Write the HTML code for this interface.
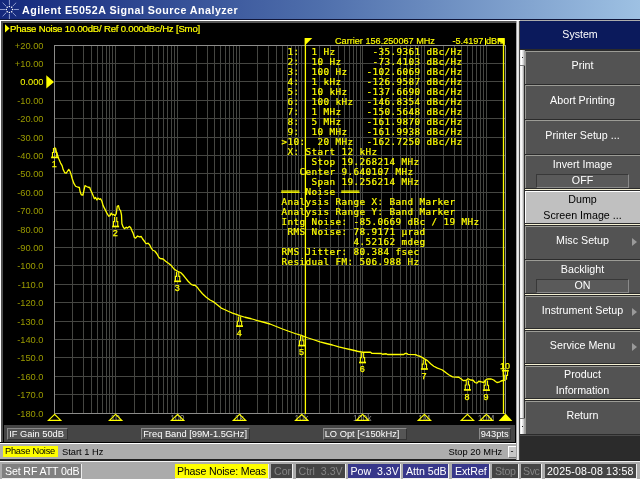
<!DOCTYPE html>
<html><head><meta charset="utf-8"><title>Agilent E5052A Signal Source Analyzer</title>
<style>
html,body{margin:0;padding:0;}
body{width:640px;height:479px;overflow:hidden;position:relative;background:#c0c0c0;font-family:"Liberation Sans","DejaVu Sans",sans-serif;}
div{position:absolute;box-sizing:border-box;white-space:nowrap;}
.tb{left:0;top:0;width:640px;height:19px;background:linear-gradient(90deg,#14287c 0%,#4f6fac 50%,#9ec1e3 100%);}
.tb .t{left:22px;top:3px;color:#fff;font-weight:bold;font-size:10.7px;line-height:15px;letter-spacing:0.47px;}
.hl{left:0;top:19px;width:640px;height:1px;background:#10163a;}
.wl{left:0;top:20px;width:520px;height:1.3px;background:#fff;}
.lw{left:0;top:20px;width:1px;height:424px;background:#fff;}
.plotbg{left:1px;top:21px;width:515px;height:423px;background:#000;border-left:2px solid #505050;border-top:2px solid #585858;}
.plot{position:absolute;left:0;top:0;}
.ttl{left:10px;top:22px;color:#ffff00;-webkit-text-stroke:0.2px #ffff00;font-size:9.6px;line-height:13px;letter-spacing:-0.2px;}
.yl{left:0;width:43.5px;text-align:right;color:#9a9a00;font-size:9.3px;line-height:12px;}
.yl.ref{color:#ffff00;}
.mn{font-family:"Liberation Sans",sans-serif;font-size:9px;fill:#ffff00;stroke:#ffff00;stroke-width:0.25px;text-anchor:middle;}
.xl{font-family:"Liberation Sans",sans-serif;font-size:8.5px;fill:#8c8c8c;text-anchor:middle;}
.mt{color:#ffff00;font-family:"DejaVu Sans Mono","Liberation Mono",monospace;font-size:9.3px;letter-spacing:0.4px;line-height:10px;white-space:pre;-webkit-text-stroke:0.2px #ffff00;}
.car{color:#ffff00;-webkit-text-stroke:0.15px #ffff00;font-size:9.15px;line-height:12px;top:34.5px;}
.sb{left:4px;top:425px;width:511px;height:17px;background:#454545;}
.sbx{top:3px;height:12px;background:#555;border:1px solid #8a8a8a;border-right-color:#333;border-bottom-color:#333;color:#fff;font-size:9.3px;line-height:10px;padding-left:1.2px;}
.stim{left:1px;top:444px;width:516px;height:15.5px;background:#adadad;color:#000;font-size:9.3px;line-height:16px;}
.stat{left:0;top:461px;width:640px;height:18px;background:#ababab;border-top:1px solid #f4f4f4;}
.sx{top:2px;height:14.5px;font-size:10.6px;line-height:14px;padding-left:3px;border-right:1px solid #eee;border-bottom:1px solid #eee;}
.panel{left:520px;top:21px;width:120px;height:439px;background:#2b2b2b;}
.hdr{left:0;top:0;width:120px;height:28px;background:#0b1a5c;color:#fff;font-size:10.6px;line-height:27px;text-align:center;}
.slot{left:0;width:120px;height:35px;color:#fff;font-size:10.7px;text-align:center;}
.slot.ssel{color:#000;}
.kb{left:4.7px;width:116px;background:#535353;border-top:1.1px solid #9c9c96;border-left:1.2px solid #9a9a96;}
.kb.sel{background:#c0c0c0;border-top-color:#fff;border-left-color:#fff;}
.sep{left:4.7px;width:116px;height:1.2px;background:#f6f2d4;}
.kl{left:6px;top:2px;width:113px;line-height:29.6px;}
.kl1{left:6px;top:3px;width:113px;line-height:15px;}
.kl2{left:6px;top:2.4px;width:113px;line-height:16px;white-space:normal;}
.kv{left:16px;top:19.5px;width:93px;height:14px;background:#5a5a5a;border:1px solid #383838;border-bottom-color:#8a8a8a;border-right-color:#8a8a8a;line-height:11px;}
.arr{right:2.7px;top:13.6px;width:0;height:0;border-left:5.6px solid #9a9a9a;border-top:4.6px solid transparent;border-bottom:4.6px solid transparent;}
#root{left:0;top:0;width:640px;height:479px;overflow:hidden;background:#adadad;will-change:transform;}
</style></head><body><div id="root">
<div class="tb"><svg style="position:absolute;left:0;top:0" width="20" height="19" viewBox="0 0 20 19"><g stroke="#c8d2f4" stroke-width="0.8" stroke-linecap="round" opacity="0.85"><path d="M9.4 0.3V4.6M9.4 14.4V18.7M0.3 9.5H4.6M14.2 9.5H18.5M2.9 3L5.9 6M12.9 13L15.9 16M15.9 3L12.9 6M5.9 13L2.9 16"/></g><g fill="#fff"><circle cx="9.4" cy="6.4" r="0.75"/><circle cx="11.6" cy="7.3" r="0.75"/><circle cx="12.5" cy="9.5" r="0.75"/><circle cx="11.6" cy="11.7" r="0.75"/><circle cx="9.4" cy="12.6" r="0.75"/><circle cx="7.2" cy="11.7" r="0.75"/><circle cx="6.3" cy="9.5" r="0.75"/><circle cx="7.2" cy="7.3" r="0.75"/></g></svg><div class="t">Agilent E5052A Signal Source Analyzer</div></div>
<div class="hl"></div>
<div class="plotbg"></div>
<div class="wl"></div><div class="lw"></div>
<div class="sb">
<div class="sbx" style="left:3px;width:61px">IF Gain 50dB</div>
<div class="sbx" style="left:137px;width:109px">Freq Band [99M-1.5GHz]</div>
<div class="sbx" style="left:318.5px;width:84px">LO Opt [&lt;150kHz]</div>
<div class="sbx" style="left:474.5px;width:32px">943pts</div>
</div>
<svg class="plot" width="640" height="479" viewBox="0 0 640 479"><path d="M54 63.5H506M54 81.5H506M54 100.5H506M54 118.5H506M54 137.5H506M54 155.5H506M54 173.5H506M54 192.5H506M54 210.5H506M54 229.5H506M54 247.5H506M54 265.5H506M54 284.5H506M54 302.5H506M54 321.5H506M54 339.5H506M54 357.5H506M54 376.5H506M54 394.5H506M72.5 45.5V413.5M83.5 45.5V413.5M91.5 45.5V413.5M97.5 45.5V413.5M102.5 45.5V413.5M106.5 45.5V413.5M109.5 45.5V413.5M112.5 45.5V413.5M115.5 45.5V413.5M134.5 45.5V413.5M145.5 45.5V413.5M152.5 45.5V413.5M158.5 45.5V413.5M163.5 45.5V413.5M167.5 45.5V413.5M171.5 45.5V413.5M174.5 45.5V413.5M177.5 45.5V413.5M196.5 45.5V413.5M207.5 45.5V413.5M214.5 45.5V413.5M220.5 45.5V413.5M225.5 45.5V413.5M229.5 45.5V413.5M233.5 45.5V413.5M236.5 45.5V413.5M239.5 45.5V413.5M257.5 45.5V413.5M268.5 45.5V413.5M276.5 45.5V413.5M282.5 45.5V413.5M287.5 45.5V413.5M291.5 45.5V413.5M295.5 45.5V413.5M298.5 45.5V413.5M301.5 45.5V413.5M319.5 45.5V413.5M330.5 45.5V413.5M338.5 45.5V413.5M344.5 45.5V413.5M349.5 45.5V413.5M353.5 45.5V413.5M356.5 45.5V413.5M360.5 45.5V413.5M362.5 45.5V413.5M381.5 45.5V413.5M392.5 45.5V413.5M400.5 45.5V413.5M406.5 45.5V413.5M410.5 45.5V413.5M415.5 45.5V413.5M418.5 45.5V413.5M421.5 45.5V413.5M424.5 45.5V413.5M443.5 45.5V413.5M454.5 45.5V413.5M461.5 45.5V413.5M467.5 45.5V413.5M472.5 45.5V413.5M476.5 45.5V413.5M480.5 45.5V413.5M483.5 45.5V413.5M486.5 45.5V413.5" stroke="#454642" stroke-width="1" fill="none" shape-rendering="crispEdges"/><rect x="54.5" y="45.5" width="451.0" height="368.0" fill="none" stroke="#8c8c8a" stroke-width="1" shape-rendering="crispEdges"/><path d="M305.4 38V414.0M503.5 38V414.0" stroke="#ffff00" stroke-width="1.3" fill="none"/><path d="M304.79999999999995 38h7.5l-7.5 7.5z" fill="#ffff00"/><path d="M504.7 38h-7l0 3l3.5 1.5l3.5 3z" fill="#ffff00"/><path d="M485.5 38V45" stroke="#ffff00" stroke-width="1"/><polyline points="54.60,147.25 56.00,150.60 57.50,155.00 58.75,158.75 60.60,163.10 62.10,165.60 63.10,169.40 64.75,172.75 66.25,173.10 67.50,171.25 68.75,169.40 70.00,171.25 71.00,174.40 72.25,178.75 73.75,183.10 75.60,186.25 78.10,187.25 79.40,187.50 80.00,191.25 81.25,194.75 82.90,195.00 83.75,191.25 85.00,185.60 86.50,186.50 88.10,187.25 89.75,187.50 90.60,190.00 91.25,191.25 93.10,195.60 94.40,198.75 95.60,197.50 96.90,200.00 98.10,198.10 99.40,199.40 100.60,198.75 101.90,201.25 103.10,205.60 105.00,209.40 106.90,213.10 108.75,216.25 110.00,215.60 111.25,213.10 112.50,215.00 113.75,214.40 115.00,215.80 116.25,213.75 117.25,206.25 118.50,205.60 119.40,209.40 120.60,210.60 121.50,215.00 121.90,223.75 123.10,226.90 124.40,228.75 126.25,227.25 127.50,228.10 129.40,226.50 130.60,227.50 131.90,230.60 133.10,233.10 134.40,237.50 135.60,238.10 137.50,236.00 139.40,236.90 141.25,236.50 142.50,238.75 144.40,241.25 145.60,243.10 146.90,243.75 148.10,243.10 149.75,245.00 151.25,248.10 152.75,250.25 154.75,251.00 156.90,253.75 158.75,257.25 160.25,258.50 163.10,259.00 165.60,261.25 168.75,263.50 171.25,265.60 174.40,269.40 177.50,271.25 180.60,272.50 183.10,275.00 185.60,278.10 188.10,281.25 191.25,284.40 193.10,285.25 195.00,285.25 197.50,287.50 198.75,289.40 202.50,293.75 206.25,297.25 210.00,300.00 213.75,301.90 217.50,305.00 221.25,308.10 225.00,309.75 228.75,311.50 232.50,313.10 236.25,314.40 239.40,315.60 245.00,317.25 251.25,318.75 257.50,320.60 263.75,322.25 270.00,324.00 276.25,326.50 282.50,329.00 288.75,331.25 295.00,333.50 301.25,335.40 307.50,337.75 313.75,339.75 320.00,341.90 326.25,343.50 332.50,345.00 338.75,346.90 345.00,348.30 351.25,349.75 357.50,351.25 362.50,352.25 370.60,352.25 371.90,353.40 381.25,353.50 382.50,354.25 386.25,353.75 387.50,354.50 403.75,354.50 405.00,353.50 406.90,353.50 408.10,354.40 415.60,354.60 417.50,355.60 420.00,356.25 422.50,357.60 424.40,358.90 427.50,360.60 430.60,363.75 433.75,366.25 437.50,368.10 441.90,369.75 445.00,371.90 448.75,374.75 452.50,376.90 458.75,377.25 460.60,378.50 463.10,380.60 466.25,380.25 468.10,378.75 470.60,380.00 473.10,380.25 475.00,382.50 476.90,383.10 478.75,381.25 481.25,381.90 483.75,382.50 485.60,380.00 487.50,379.00 491.25,379.00 493.75,380.00 495.50,381.50 497.00,382.50 499.00,382.20 501.00,381.00 503.00,380.50 505.30,380.00" fill="none" stroke="#ffff00" stroke-width="1.3" stroke-linejoin="round"/><path d="M53.45 147.90V152.50H52.45V156.90M55.75 147.90V152.50H56.75V156.90" fill="none" stroke="#ffff00" stroke-width="1.1"/><path d="M51.10 157.40H58.10" stroke="#ffff00" stroke-width="1.7"/><text x="54.30" y="167.20" class="mn">1</text><path d="M114.45 217.00V221.60H113.45V226.00M116.75 217.00V221.60H117.75V226.00" fill="none" stroke="#ffff00" stroke-width="1.1"/><path d="M112.10 226.50H119.10" stroke="#ffff00" stroke-width="1.7"/><text x="115.30" y="236.30" class="mn">2</text><path d="M176.45 271.80V276.40H175.45V280.80M178.75 271.80V276.40H179.75V280.80" fill="none" stroke="#ffff00" stroke-width="1.1"/><path d="M174.10 281.30H181.10" stroke="#ffff00" stroke-width="1.7"/><text x="177.30" y="291.10" class="mn">3</text><path d="M238.35 316.60V321.20H237.35V325.60M240.65 316.60V321.20H241.65V325.60" fill="none" stroke="#ffff00" stroke-width="1.1"/><path d="M236.00 326.10H243.00" stroke="#ffff00" stroke-width="1.7"/><text x="239.20" y="335.90" class="mn">4</text><path d="M300.55 336.10V340.70H299.55V345.10M302.85 336.10V340.70H303.85V345.10" fill="none" stroke="#ffff00" stroke-width="1.1"/><path d="M298.20 345.60H305.20" stroke="#ffff00" stroke-width="1.7"/><text x="301.40" y="355.40" class="mn">5</text><path d="M361.35 353.00V357.60H360.35V362.00M363.65 353.00V357.60H364.65V362.00" fill="none" stroke="#ffff00" stroke-width="1.1"/><path d="M359.00 362.50H366.00" stroke="#ffff00" stroke-width="1.7"/><text x="362.20" y="372.30" class="mn">6</text><path d="M423.25 359.50V364.10H422.25V368.50M425.55 359.50V364.10H426.55V368.50" fill="none" stroke="#ffff00" stroke-width="1.1"/><path d="M420.90 369.00H427.90" stroke="#ffff00" stroke-width="1.7"/><text x="424.10" y="378.80" class="mn">7</text><path d="M466.25 380.40V385.00H465.25V389.40M468.55 380.40V385.00H469.55V389.40" fill="none" stroke="#ffff00" stroke-width="1.1"/><path d="M463.90 389.90H470.90" stroke="#ffff00" stroke-width="1.7"/><text x="467.10" y="399.70" class="mn">8</text><path d="M485.25 380.60V385.20H484.25V389.60M487.55 380.60V385.20H488.55V389.60" fill="none" stroke="#ffff00" stroke-width="1.1"/><path d="M482.90 390.10H489.90" stroke="#ffff00" stroke-width="1.7"/><text x="486.10" y="399.90" class="mn">9</text><path d="M504.25 379.73V375.36H503.25V371.18M506.55 379.73V375.36H507.55V371.18" fill="none" stroke="#ffff00" stroke-width="1.1"/><path d="M501.90 370.71H508.90" stroke="#ffff00" stroke-width="1.7"/><text x="505.10" y="368.90" class="mn">10</text><text x="115.30" y="421" class="xl">10</text><text x="177.30" y="421" class="xl">100</text><text x="239.20" y="421" class="xl">1k</text><text x="301.40" y="421" class="xl">10k</text><text x="362.20" y="421" class="xl">100k</text><text x="424.10" y="421" class="xl">1M</text><text x="486.10" y="421" class="xl">10M</text><path d="M54.60 414.30L48.40 420.40H60.80Z" fill="none" stroke="#ffff00" stroke-width="1.15"/><path d="M115.60 414.30L109.40 420.40H121.80Z" fill="none" stroke="#ffff00" stroke-width="1.15"/><path d="M177.60 414.30L171.40 420.40H183.80Z" fill="none" stroke="#ffff00" stroke-width="1.15"/><path d="M239.50 414.30L233.30 420.40H245.70Z" fill="none" stroke="#ffff00" stroke-width="1.15"/><path d="M301.70 414.30L295.50 420.40H307.90Z" fill="none" stroke="#ffff00" stroke-width="1.15"/><path d="M362.50 414.30L356.30 420.40H368.70Z" fill="none" stroke="#ffff00" stroke-width="1.15"/><path d="M424.40 414.30L418.20 420.40H430.60Z" fill="none" stroke="#ffff00" stroke-width="1.15"/><path d="M467.40 414.30L461.20 420.40H473.60Z" fill="none" stroke="#ffff00" stroke-width="1.15"/><path d="M486.40 414.30L480.20 420.40H492.60Z" fill="none" stroke="#ffff00" stroke-width="1.15"/><path d="M505.50 413.50L498.60 421.10H512.40Z" fill="#ffff00"/><path d="M46.3 75.3L54 81.9L46.3 88.5Z" fill="#ffff00"/><path d="M5 24.3L9.6 28.4L5 32.5Z" fill="#ffff00"/></svg>
<div class="ttl">Phase Noise 10.00dB/ Ref 0.000dBc/Hz [Smo]</div>
<div class="yl" style="top:39.5px">+20.00</div><div class="yl" style="top:57.5px">+10.00</div><div class="yl ref" style="top:75.5px">0.000</div><div class="yl" style="top:94.5px">-10.00</div><div class="yl" style="top:112.5px">-20.00</div><div class="yl" style="top:131.5px">-30.00</div><div class="yl" style="top:149.5px">-40.00</div><div class="yl" style="top:167.5px">-50.00</div><div class="yl" style="top:186.5px">-60.00</div><div class="yl" style="top:204.5px">-70.00</div><div class="yl" style="top:223.5px">-80.00</div><div class="yl" style="top:241.5px">-90.00</div><div class="yl" style="top:259.5px">-100.0</div><div class="yl" style="top:278.5px">-110.0</div><div class="yl" style="top:296.5px">-120.0</div><div class="yl" style="top:315.5px">-130.0</div><div class="yl" style="top:333.5px">-140.0</div><div class="yl" style="top:351.5px">-150.0</div><div class="yl" style="top:370.5px">-160.0</div><div class="yl" style="top:388.5px">-170.0</div><div class="yl" style="top:407.5px">-180.0</div>
<div class="car" style="left:335px">Carrier 156.250067 MHz</div>
<div class="car" style="left:452.5px">-5.4197 dBm</div>
<div class="mt" style="left:287.5px;top:46.6px">1:</div><div class="mt" style="left:311.5px;top:46.6px">1 Hz</div><div class="mt" style="left:372.5px;top:46.6px">-35.9361 dBc/Hz</div><div class="mt" style="left:287.5px;top:56.6px">2:</div><div class="mt" style="left:311.5px;top:56.6px">10 Hz</div><div class="mt" style="left:372.5px;top:56.6px">-73.4103 dBc/Hz</div><div class="mt" style="left:287.5px;top:66.6px">3:</div><div class="mt" style="left:311.5px;top:66.6px">100 Hz</div><div class="mt" style="left:366.5px;top:66.6px">-102.6069 dBc/Hz</div><div class="mt" style="left:287.5px;top:76.6px">4:</div><div class="mt" style="left:311.5px;top:76.6px">1 kHz</div><div class="mt" style="left:366.5px;top:76.6px">-126.9587 dBc/Hz</div><div class="mt" style="left:287.5px;top:86.6px">5:</div><div class="mt" style="left:311.5px;top:86.6px">10 kHz</div><div class="mt" style="left:366.5px;top:86.6px">-137.6690 dBc/Hz</div><div class="mt" style="left:287.5px;top:96.6px">6:</div><div class="mt" style="left:311.5px;top:96.6px">100 kHz</div><div class="mt" style="left:366.5px;top:96.6px">-146.8354 dBc/Hz</div><div class="mt" style="left:287.5px;top:106.6px">7:</div><div class="mt" style="left:311.5px;top:106.6px">1 MHz</div><div class="mt" style="left:366.5px;top:106.6px">-150.5648 dBc/Hz</div><div class="mt" style="left:287.5px;top:116.6px">8:</div><div class="mt" style="left:311.5px;top:116.6px">5 MHz</div><div class="mt" style="left:366.5px;top:116.6px">-161.9870 dBc/Hz</div><div class="mt" style="left:287.5px;top:126.6px">9:</div><div class="mt" style="left:311.5px;top:126.6px">10 MHz</div><div class="mt" style="left:366.5px;top:126.6px">-161.9938 dBc/Hz</div><div class="mt" style="left:281.5px;top:136.6px">&gt;10:</div><div class="mt" style="left:317.5px;top:136.6px">20 MHz</div><div class="mt" style="left:366.5px;top:136.6px">-162.7250 dBc/Hz</div><div class="mt" style="left:287.5px;top:146.6px">X: Start 12 kHz</div><div class="mt" style="left:311.5px;top:156.6px">Stop 19.268214 MHz</div><div class="mt" style="left:299.5px;top:166.6px">Center 9.640107 MHz</div><div class="mt" style="left:311.5px;top:176.6px">Span 19.256214 MHz</div><div class="mt" style="left:281.5px;top:186.6px">═══ Noise ═══</div><div class="mt" style="left:281.5px;top:196.6px">Analysis Range X: Band Marker</div><div class="mt" style="left:281.5px;top:206.6px">Analysis Range Y: Band Marker</div><div class="mt" style="left:281.5px;top:216.6px">Intg Noise: -85.0669 dBc / 19 MHz</div><div class="mt" style="left:287.5px;top:226.6px">RMS Noise: 78.9171 µrad</div><div class="mt" style="left:353.5px;top:236.6px">4.52162 mdeg</div><div class="mt" style="left:281.5px;top:246.6px">RMS Jitter: 80.384 fsec</div><div class="mt" style="left:281.5px;top:256.6px">Residual FM: 506.988 Hz</div>
<div style="left:0;top:442px;width:517px;height:1.5px;background:#000"></div>
<div style="left:0;top:443.3px;width:517px;height:1px;background:#fff"></div>
<div class="stim">
<div style="left:2px;top:2px;width:55px;height:11px;background:#ffff00;line-height:11.5px;padding-left:2px;letter-spacing:-0.25px">Phase Noise</div>
<div style="left:61px;top:0">Start 1 Hz</div>
<div style="left:447.5px;top:0">Stop 20 MHz</div>
<div style="left:506.5px;top:2px;width:9px;height:11.5px;background:#c8c8c8;border:1px solid #fff;border-right-color:#777;border-bottom-color:#777;line-height:8px;font-size:9px;text-align:center">-</div>
</div>
<div style="left:0;top:459.3px;width:640px;height:1.7px;background:#202020"></div>
<div style="left:515.6px;top:21px;width:3.2px;height:439px;background:linear-gradient(90deg,#777,#d0d0d0 35%,#fff 60%,#fff 75%,#999)"></div>
<div style="left:518.8px;top:21px;width:1.2px;height:439px;background:#444"></div>
<div class="panel">
<div class="hdr">System</div>
<div style="left:0;top:29px;width:3.5px;height:368px;background:linear-gradient(90deg,#e8e8e8,#fff 30%,#d8d8d8 65%,#909090)"></div>
<div style="left:0;top:29px;width:4.5px;height:16px;background:linear-gradient(90deg,#e8e8e8,#fff 30%,#d8d8d8 65%,#909090);border-bottom:1px solid #777"></div>
<div style="left:1.8px;top:36px;width:1.3px;height:1.3px;background:#222"></div>
<div style="left:0;top:397px;width:4.5px;height:16px;background:linear-gradient(90deg,#e8e8e8,#fff 30%,#d8d8d8 65%,#909090);border-top:1px solid #777"></div>
<div style="left:1.8px;top:405px;width:1.3px;height:1.3px;background:#222"></div>
<div class="slot" style="top:28px"><div class="kb" style="top:1.6px;height:33.15px"></div><div class="kl">Print</div></div><div class="slot" style="top:63px"><div class="kb" style="top:0.8px;height:33.95px"></div><div class="kl">Abort Printing</div></div><div class="slot" style="top:98px"><div class="kb" style="top:0.8px;height:33.95px"></div><div class="kl">Printer Setup ...</div></div><div class="slot" style="top:133px"><div class="kb" style="top:0.8px;height:33.00px"></div><div class="kl1">Invert Image</div><div class="kv">OFF</div></div><div class="sep" style="top:167.8px"></div><div class="slot ssel" style="top:168px"><div class="kb sel" style="top:1.6px;height:32.20px"></div><div class="kl2">Dump<br>Screen Image ...</div></div><div class="sep" style="top:202.8px"></div><div class="slot" style="top:203px"><div class="kb" style="top:1.6px;height:33.15px"></div><div class="kl">Misc Setup</div><div class="arr"></div></div><div class="slot" style="top:238px"><div class="kb" style="top:0.8px;height:33.00px"></div><div class="kl1">Backlight</div><div class="kv">ON</div></div><div class="sep" style="top:272.8px"></div><div class="slot" style="top:273px"><div class="kb" style="top:1.6px;height:32.20px"></div><div class="kl">Instrument Setup</div><div class="arr"></div></div><div class="sep" style="top:307.8px"></div><div class="slot" style="top:308px"><div class="kb" style="top:1.6px;height:32.20px"></div><div class="kl">Service Menu</div><div class="arr"></div></div><div class="sep" style="top:342.8px"></div><div class="slot" style="top:343px"><div class="kb" style="top:1.6px;height:32.20px"></div><div class="kl2">Product<br>Information</div></div><div class="sep" style="top:377.8px"></div><div class="slot" style="top:378px"><div class="kb" style="top:1.6px;height:33.15px"></div><div class="kl">Return</div></div>
<div style="left:0;top:414.3px;width:120px;height:1px;background:#4a4a4a"></div>
</div>
<div class="stat">
<div class="sx" style="left:2px;width:80px;background:#808080;color:#fff;letter-spacing:-0.12px">Set RF ATT 0dB</div>
<div class="sx" style="left:175px;width:94px;background:#ffff00;color:#000;letter-spacing:-0.17px;padding-left:2px">Phase Noise: Meas</div>
<div class="sx" style="left:271px;width:22px;background:#444;color:#858585">Cor</div>
<div class="sx" style="left:295.5px;width:50px;background:#444;color:#858585;white-space:pre">Ctrl  3.3V</div>
<div class="sx" style="left:347.5px;width:53px;background:#37378a;color:#fff;white-space:pre">Pow  3.3V</div>
<div class="sx" style="left:403px;width:46px;background:#37378a;color:#fff">Attn 5dB</div>
<div class="sx" style="left:452px;width:37.5px;background:#37378a;color:#fff">ExtRef</div>
<div class="sx" style="left:492px;width:26.5px;background:#444;color:#858585;letter-spacing:-0.3px">Stop</div>
<div class="sx" style="left:521px;width:21px;background:#444;color:#858585;letter-spacing:-0.4px;padding-left:2px">Svc</div>
<div class="sx" style="left:544.5px;width:92px;background:#444;color:#fff;letter-spacing:0.18px;padding-left:2.5px">2025-08-08 13:58</div>
</div>
</div></body></html>
